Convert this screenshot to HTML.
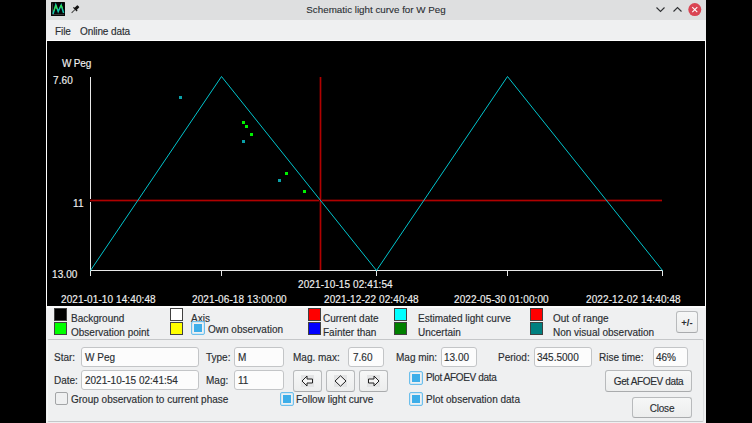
<!DOCTYPE html>
<html><head><meta charset="utf-8">
<style>
*{margin:0;padding:0;box-sizing:border-box}
html,body{width:752px;height:423px;overflow:hidden;background:#000}
body{position:relative;font-family:"Liberation Sans",sans-serif;font-size:10px;color:#2a2e32;-webkit-text-stroke:0.15px currentColor}
.a{position:absolute;white-space:nowrap;line-height:10px}
.w{color:#f0f0f0;letter-spacing:0.1px}
.sw{position:absolute;width:13px;height:13px;border:1px solid #404040}
.inp{position:absolute;background:#fcfcfc;border:1px solid #c3c5c7;border-radius:3px}
.btn{position:absolute;background:linear-gradient(#f6f7f7,#eceded);border:1px solid #b8babc;border-bottom-color:#a9abad;border-radius:3px}
.cb{position:absolute;width:13px;height:13px;border:1px solid #a3a5a7;border-radius:2px;background:#eff0f1}
.on{border-color:#6cbfec;width:14px;height:14px;box-shadow:inset 0 0 0 0.5px #b8e0f6}
.on::after{content:"";position:absolute;left:2px;top:2px;width:8px;height:8px;background:#3daee9}
</style></head><body>
<!-- window background -->
<div class="a" style="left:46px;top:0;width:660px;height:423px;background:#eff0f1"></div>
<!-- title bar -->
<div class="a" style="left:46px;top:0;width:660px;height:20px;background:#dedfe0"></div>
<svg class="a" style="left:51px;top:2px" width="14" height="14" viewBox="0 0 14 14"><rect x="0" y="0" width="14" height="14" fill="#050505" rx="0.5"/><path d="M1.5 1.5 V12.5 H13" fill="none" stroke="#555" stroke-width="0.6"/><path d="M2 12 L4.8 2.8 L7.2 9.5 L10.2 3 L12.6 11" fill="none" stroke="#12c8b0" stroke-width="1.5"/><path d="M3 9 L4.8 3.5 L6 7 M9 5.5 L10.2 3.2 L11.5 6.5" fill="none" stroke="#40e040" stroke-width="1"/></svg>
<svg class="a" style="left:69px;top:3px" width="12" height="12" viewBox="0 0 12 12"><g transform="translate(7.3,5.2) rotate(45)"><rect x="-1.5" y="-3" width="3" height="4.2" rx="0.6" fill="#141414"/><rect x="-2.6" y="0.8" width="5.2" height="1.3" fill="#141414"/><rect x="-0.45" y="1.8" width="0.9" height="4.8" fill="#3a3a3a"/></g></svg>
<div class="a" style="left:46px;top:5px;width:660px;text-align:center;font-size:9.8px;-webkit-text-stroke:0.1px currentColor">Schematic light curve for W Peg</div>
<svg class="a" style="left:655px;top:6px" width="12" height="8" viewBox="0 0 12 8"><path d="M1.5 1.5 L5.5 5.5 L9.5 1.5" fill="none" stroke="#303234" stroke-width="1.1"/></svg>
<svg class="a" style="left:672px;top:6px" width="12" height="8" viewBox="0 0 12 8"><path d="M1.5 5.5 L5.5 1.5 L9.5 5.5" fill="none" stroke="#303234" stroke-width="1.1"/></svg>
<svg class="a" style="left:688px;top:3px" width="14" height="14" viewBox="0 0 14 14"><circle cx="6.8" cy="6.6" r="6.5" fill="#da4453"/><path d="M4.3 4.1 L9.3 9.1 M9.3 4.1 L4.3 9.1" stroke="#fff" stroke-width="1.1"/></svg>
<!-- menu -->
<div class="a" style="left:55px;top:27px;font-size:10px;letter-spacing:-0.1px">File</div>
<div class="a" style="left:80px;top:27px;font-size:10px;letter-spacing:-0.1px">Online data</div>
<!-- chart -->
<div class="a" style="left:46px;top:40px;width:660px;height:266px;background:#fff"></div>
<div class="a" style="left:47px;top:41px;width:658px;height:265px;background:#000"></div>
<svg class="a" style="left:0;top:0" width="752" height="423" viewBox="0 0 752 423">
 <g shape-rendering="crispEdges" stroke-width="1" fill="none">
  <path d="M90.5 77 V276" stroke="#e8e8e8"/>
  <path d="M90 270.5 H663" stroke="#e8e8e8"/>
  <path d="M221.5 270 V276 M376.5 270 V276 M507.5 270 V276 M662.5 270 V276" stroke="#e8e8e8"/>
  <path d="M90 199.5 H662 M90 201.5 H662" stroke="#3c0000"/><path d="M90 200.5 H662" stroke="#b00000"/>
  <path d="M319.5 77 V270 M321.5 77 V270" stroke="#3c0000"/><path d="M320.5 77 V270" stroke="#b00000"/>
 </g>
 <path d="M90.5 270.5 L221.5 76.5 L376.5 270.5 L507.5 76.5 L662.5 270.5" fill="none" stroke="#00c4cc" stroke-width="1"/>
 <g shape-rendering="crispEdges">
  <rect x="179" y="96" width="3" height="3" fill="#0aa0a8"/>
  <rect x="242" y="121" width="3" height="3" fill="#00f000"/>
  <rect x="245" y="125" width="3" height="3" fill="#00f000"/>
  <rect x="250" y="133" width="3" height="3" fill="#00f000"/>
  <rect x="242" y="140" width="3" height="3" fill="#0aa0a8"/>
  <rect x="285" y="172" width="3" height="3" fill="#00f000"/>
  <rect x="278" y="179" width="3" height="3" fill="#0aa0a8"/>
  <rect x="303" y="190" width="3" height="3" fill="#00f000"/>
 </g>
</svg>
<div class="a w" style="left:62px;top:59px;letter-spacing:-0.2px">W Peg</div>
<div class="a w" style="left:53px;top:76px">7.60</div>
<div class="a w" style="left:73px;top:199px">11</div>
<div class="a w" style="left:52px;top:270px">13.00</div>
<div class="a w" style="left:298px;top:280px">2021-10-15 02:41:54</div>
<div class="a w" style="left:61px;top:295px">2021-01-10 14:40:48</div>
<div class="a w" style="left:192px;top:295px">2021-06-18 13:00:00</div>
<div class="a w" style="left:324px;top:295px">2021-12-22 02:40:48</div>
<div class="a w" style="left:454px;top:295px">2022-05-30 01:00:00</div>
<div class="a w" style="left:586px;top:295px">2022-12-02 14:40:48</div>
<!-- legend -->
<div class="a" style="left:46px;top:306px;width:660px;height:2px;background:#fbfbfb"></div>
<div class="sw" style="left:54px;top:308px;background:#000"></div>
<div class="sw" style="left:54px;top:322px;background:#00ff00"></div>
<div class="sw" style="left:170px;top:308px;background:#fff"></div>
<div class="sw" style="left:170px;top:322px;background:#ffff00"></div>
<div class="sw" style="left:308px;top:308px;background:#ff0000"></div>
<div class="sw" style="left:308px;top:322px;background:#0000ff"></div>
<div class="sw" style="left:394px;top:308px;background:#00ffff"></div>
<div class="sw" style="left:394px;top:322px;background:#008000"></div>
<div class="sw" style="left:530px;top:308px;background:#ff0000"></div>
<div class="sw" style="left:530px;top:322px;background:#008080"></div>
<div class="a" style="left:71px;top:314px">Background</div>
<div class="a" style="left:71px;top:328px">Observation point</div>
<div class="a" style="left:191px;top:314px">Axis</div>
<div class="cb on" style="left:191px;top:321px"></div>
<div class="a" style="left:208px;top:325px">Own observation</div>
<div class="a" style="left:323px;top:314px">Current date</div>
<div class="a" style="left:323px;top:328px">Fainter than</div>
<div class="a" style="left:418px;top:314px">Estimated light curve</div>
<div class="a" style="left:418px;top:328px">Uncertain</div>
<div class="a" style="left:553px;top:314px">Out of range</div>
<div class="a" style="left:553px;top:328px">Non visual observation</div>
<div class="btn" style="left:676px;top:311px;width:22px;height:22px"></div>
<div class="a" style="left:676px;top:318px;width:22px;text-align:center;font-size:9.5px;font-weight:bold;-webkit-text-stroke:0">+/-</div>
<!-- group frame -->
<div class="a" style="left:47px;top:339px;width:657px;height:83px;border:1px solid #c5c7c9;border-left-color:#f6f7f7;border-right-color:#dcdddf;border-radius:2px"></div>
<div class="a" style="left:54px;top:353px">Star:</div>
<div class="inp" style="left:81px;top:347px;width:118px;height:20px"></div>
<div class="a" style="left:85px;top:353px">W Peg</div>
<div class="a" style="left:206px;top:353px">Type:</div>
<div class="inp" style="left:234px;top:347px;width:50px;height:20px"></div>
<div class="a" style="left:238px;top:353px">M</div>
<div class="a" style="left:293px;top:353px">Mag. max:</div>
<div class="inp" style="left:348px;top:347px;width:36px;height:20px"></div>
<div class="a" style="left:353px;top:353px">7.60</div>
<div class="a" style="left:396px;top:353px">Mag min:</div>
<div class="inp" style="left:441px;top:347px;width:36px;height:20px"></div>
<div class="a" style="left:444px;top:353px">13.00</div>
<div class="a" style="left:498px;top:353px">Period:</div>
<div class="inp" style="left:534px;top:347px;width:58px;height:20px"></div>
<div class="a" style="left:537px;top:353px">345.5000</div>
<div class="a" style="left:599px;top:353px">Rise time:</div>
<div class="inp" style="left:653px;top:347px;width:35px;height:20px"></div>
<div class="a" style="left:656px;top:353px">46%</div>

<div class="a" style="left:54px;top:376px">Date:</div>
<div class="inp" style="left:81px;top:370px;width:118px;height:20px"></div>
<div class="a" style="left:85px;top:376px">2021-10-15 02:41:54</div>
<div class="a" style="left:206px;top:376px">Mag:</div>
<div class="inp" style="left:234px;top:370px;width:50px;height:20px"></div>
<div class="a" style="left:238px;top:376px">11</div>
<div class="btn" style="left:293px;top:370px;width:29px;height:22px"></div>
<div class="btn" style="left:326px;top:370px;width:29px;height:22px"></div>
<div class="btn" style="left:359px;top:370px;width:29px;height:22px"></div>
<svg class="a" style="left:301px;top:375px" width="13" height="12" viewBox="0 0 13 12"><rect x="0" y="0" width="13" height="12" fill="#e3e4e5"/><path d="M1 6 L6 1 V4 H11.5 V8 H6 V11 Z" fill="#f4f4f4" stroke="#222" stroke-width="1" stroke-linejoin="miter"/></svg>
<svg class="a" style="left:334px;top:375px" width="13" height="12" viewBox="0 0 13 12"><rect x="0" y="0" width="13" height="12" fill="#e3e4e5"/><path d="M6.5 0.8 L12 6 L6.5 11.2 L1 6 Z" fill="#f4f4f4" stroke="#222" stroke-width="1"/></svg>
<svg class="a" style="left:367px;top:375px" width="13" height="12" viewBox="0 0 13 12"><rect x="0" y="0" width="13" height="12" fill="#e3e4e5"/><path d="M12 6 L7 1 V4 H1.5 V8 H7 V11 Z" fill="#f4f4f4" stroke="#222" stroke-width="1" stroke-linejoin="miter"/></svg>
<div class="cb on" style="left:409px;top:371px"></div>
<div class="a" style="left:426px;top:373px;letter-spacing:-0.35px">Plot AFOEV data</div>
<div class="btn" style="left:605px;top:370px;width:87px;height:22px"></div>
<div class="a" style="left:605px;top:377px;width:87px;text-align:center;letter-spacing:-0.35px">Get AFOEV data</div>

<div class="cb" style="left:55px;top:392px"></div>
<div class="a" style="left:71px;top:395px">Group observation to current phase</div>
<div class="cb on" style="left:280px;top:392px"></div>
<div class="a" style="left:296px;top:395px">Follow light curve</div>
<div class="cb on" style="left:409px;top:392px"></div>
<div class="a" style="left:426px;top:395px">Plot observation data</div>
<div class="btn" style="left:632px;top:397px;width:60px;height:21px"></div>
<div class="a" style="left:632px;top:404px;width:60px;text-align:center;letter-spacing:-0.2px">Close</div>
</body></html>
